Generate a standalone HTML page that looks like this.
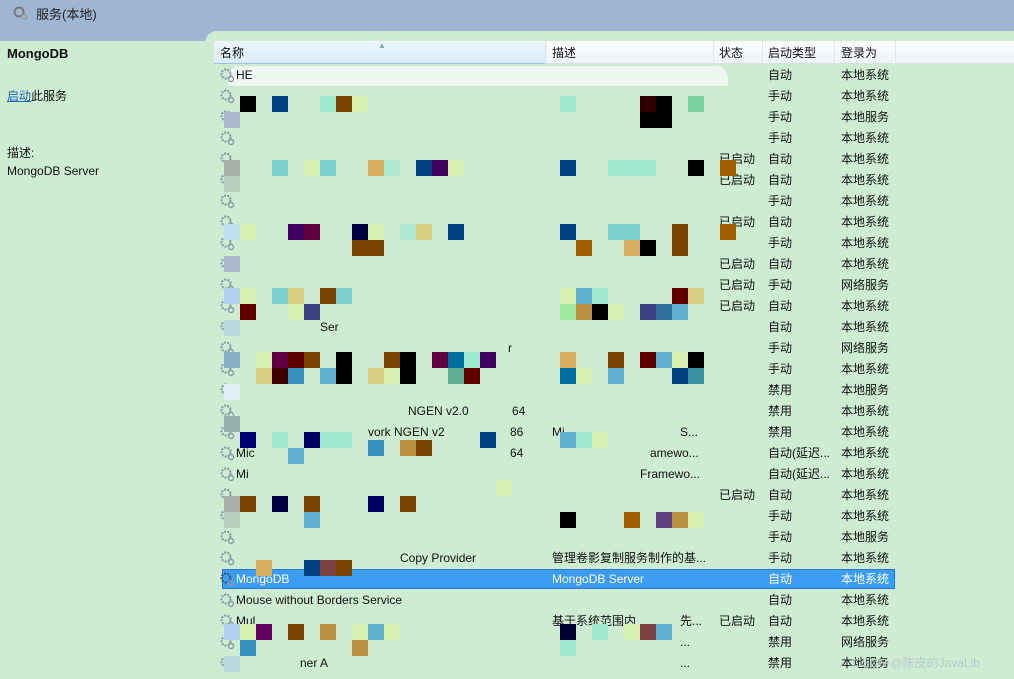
<!DOCTYPE html>
<html><head><meta charset="utf-8">
<style>
*{margin:0;padding:0;box-sizing:border-box}
body{width:1014px;height:679px;overflow:hidden;background:#cdecd2;font-family:"Liberation Sans","Noto Sans CJK SC",sans-serif;font-size:12px;color:#111;position:relative}
.t{position:absolute;white-space:nowrap;line-height:14px}
.b{position:absolute;width:16px;height:16px}
</style></head><body>
<div style="position:absolute;left:0;top:0;width:1014px;height:41px;background:#9fb6d2"></div>
<div style="position:absolute;left:205px;top:31px;width:809px;height:12px;background:#cdecd2;border-top-left-radius:12px"></div>
<div style="position:absolute;left:0;top:41px;width:205px;height:638px;background:#cdecd2"></div>
<svg style="position:absolute;left:12px;top:5px" width="16" height="16" viewBox="0 0 16 16"><circle cx="7" cy="7" r="4.5" fill="none" stroke="#777" stroke-width="2"/><circle cx="12" cy="12" r="2.5" fill="none" stroke="#999" stroke-width="1.5"/></svg>
<div class="t" style="left:36px;top:8px;font-size:13px;color:#222">服务(本地)</div>
<div class="t" style="left:7px;top:47px;font-weight:bold;font-size:13px">MongoDB</div>
<div class="t" style="left:7px;top:89px"><span style="color:#1866c0;text-decoration:underline">启动</span>此服务</div>
<div class="t" style="left:7px;top:146px">描述:</div>
<div class="t" style="left:7px;top:164px">MongoDB Server</div>
<div style="position:absolute;left:214px;top:41px;width:800px;height:23px;background:linear-gradient(#fbfdff,#eef4f9);border-bottom:1px solid #d5dfe8"></div>
<div style="position:absolute;left:214px;top:41px;width:331px;height:23px;background:linear-gradient(#eef6fd,#dcecf8);border-bottom:1px solid #9cc4e4"></div>
<div style="position:absolute;left:378px;top:41px;font-size:8px;color:#7aa">▲</div>
<div style="position:absolute;left:545px;top:41px;width:1px;height:23px;background:#d8e4ee"></div>
<div style="position:absolute;left:713px;top:41px;width:1px;height:23px;background:#e0e6ec"></div>
<div style="position:absolute;left:762px;top:41px;width:1px;height:23px;background:#e0e6ec"></div>
<div style="position:absolute;left:834px;top:41px;width:1px;height:23px;background:#e0e6ec"></div>
<div style="position:absolute;left:895px;top:41px;width:1px;height:23px;background:#e0e6ec"></div>
<div class="t" style="left:220px;top:46px">名称</div>
<div class="t" style="left:552px;top:46px">描述</div>
<div class="t" style="left:719px;top:46px">状态</div>
<div class="t" style="left:768px;top:46px">启动类型</div>
<div class="t" style="left:841px;top:46px">登录为</div>
<div style="position:absolute;left:228px;top:66px;width:500px;height:20px;background:#eef7f0;border-radius:12px 12px 0 0"></div>
<div style="position:absolute;left:222px;top:569px;width:673px;height:20px;background:#3c9cf4;border:1px solid #2a78c8"></div>
<div id="rows"></div>
<div class="t" style="left:853px;top:656px;color:#b8c8c8;font-size:12px">CSDN @陈皮的JavaLib</div>
<script>
var r=[["","自动","本地系统"],["","手动","本地系统"],["","手动","本地服务"],["","手动","本地系统"],["已启动","自动","本地系统"],["已启动","自动","本地系统"],["","手动","本地系统"],["已启动","自动","本地系统"],["","手动","本地系统"],["已启动","自动","本地系统"],["已启动","手动","网络服务"],["已启动","自动","本地系统"],["","自动","本地系统"],["","手动","网络服务"],["","手动","本地系统"],["","禁用","本地服务"],["","禁用","本地系统"],["","禁用","本地系统"],["","自动(延迟...","本地系统"],["","自动(延迟...","本地系统"],["已启动","自动","本地系统"],["","手动","本地系统"],["","手动","本地服务"],["","手动","本地系统"],["","自动","本地系统"],["","自动","本地系统"],["已启动","自动","本地系统"],["","禁用","网络服务"],["","禁用","本地服务"]];
var frag=[[0,236,"HE"],[12,320,"Ser"],[13,508,"r"],[16,408,"NGEN v2.0"],[16,512,"64"],[17,368,"vork NGEN v2"],[17,510,"86"],[17,552,"Mi"],[17,680,"S..."],[18,236,"Mic"],[18,510,"64"],[18,650,"amewo..."],[19,236,"Mi"],[19,640,"Framewo..."],[23,400,"Copy Provider"],[23,552,"管理卷影复制服务制作的基..."],[24,236,"MongoDB"],[24,552,"MongoDB Server"],[25,236,"Mouse without Borders Service"],[26,236,"Mul"],[26,552,"基于系统范围内"],[26,680,"先..."],[27,680,"..."],[28,300,"ner A"],[28,680,"..."]];
var h="";
for(var i=0;i<r.length;i++){var y=68+i*21;var c=i==24?"#fff":"#111";
h+='<svg style="position:absolute;left:219px;top:'+(y-1)+'px" width="16" height="16" viewBox="0 0 16 16"><circle cx="7" cy="7" r="4.5" fill="none" stroke="'+(i==24?"#357":"#8a9aa8")+'" stroke-width="2.2" stroke-dasharray="2 1.2"/><circle cx="12" cy="12" r="2.5" fill="none" stroke="#8a9aa8" stroke-width="1.4"/></svg>';
h+='<div class="t" style="left:719px;top:'+y+'px;color:'+c+'">'+r[i][0]+'</div><div class="t" style="left:768px;top:'+y+'px;color:'+c+'">'+r[i][1]+'</div><div class="t" style="left:841px;top:'+y+'px;color:'+c+'">'+r[i][2]+'</div>';}
for(var k=0;k<frag.length;k++){var f=frag[k];h+='<div class="t" style="left:'+f[1]+'px;top:'+(68+f[0]*21)+'px;color:'+(f[0]==24?"#fff":"#111")+'">'+f[2]+'</div>';}
var B=[[96,240,"#000"],[96,272,"#004080"],[96,320,"#9fe8d0"],[96,336,"#7b4300"],[96,352,"#d8f0b0"],[96,560,"#9fe8d0"],[96,640,"#300000"],[96,656,"#000"],[96,688,"#7bd09f"],[112,640,"#000"],[112,656,"#000"],[112,224,"#aab8d0"],
[160,224,"#aab0aa"],[160,272,"#7bd0d0"],[160,304,"#d8f0b0"],[160,320,"#7bd0d0"],[160,368,"#d8b060"],[160,384,"#aee8d0"],[160,416,"#004080"],[160,432,"#400060"],[160,448,"#d8f0b0"],[160,560,"#004080"],[160,608,"#9fe8d0"],[160,624,"#9fe8d0"],[160,640,"#9fe8d0"],[160,688,"#000"],[160,720,"#a06000"],[176,224,"#b8d0c0"],
[224,224,"#bde0f0"],[224,240,"#d8f0b0"],[224,288,"#400060"],[224,304,"#600040"],[224,352,"#000040"],[224,368,"#d8f0b0"],[224,400,"#aee8d0"],[224,416,"#d8d080"],[224,448,"#004080"],[224,560,"#004080"],[224,608,"#7bd0d0"],[224,624,"#7bd0d0"],[224,672,"#7b4300"],[224,720,"#a06000"],
[240,352,"#7b4300"],[240,368,"#7b4300"],[240,576,"#a06000"],[240,624,"#d8b060"],[240,640,"#000"],[240,672,"#7b4300"],[256,224,"#aab8d0"],
[288,224,"#b0d0f0"],[288,240,"#d8f0b0"],[288,272,"#7bd0d0"],[288,288,"#d8d080"],[288,320,"#7b4300"],[288,336,"#7bd0d0"],[288,560,"#d8f0b0"],[288,576,"#60b0d0"],[288,592,"#9fe8d0"],[288,672,"#600000"],[288,688,"#d8d080"],
[304,240,"#600000"],[304,288,"#d8f0b0"],[304,304,"#3b4080"],[304,560,"#9fe89f"],[304,576,"#b89040"],[304,592,"#000"],[304,608,"#d8f0b0"],[304,640,"#3b4080"],[304,656,"#3070a0"],[304,672,"#60b0d0"],[320,224,"#b8d8e0"],
[352,224,"#8aadc8"],[352,256,"#d8f0b0"],[352,272,"#600040"],[352,288,"#600000"],[352,304,"#7b4300"],[352,336,"#000"],[352,384,"#7b4300"],[352,400,"#000"],[352,432,"#600040"],[352,448,"#0070a0"],[352,464,"#9fe8d0"],[352,480,"#400060"],[352,560,"#d8b060"],[352,608,"#7b4300"],[352,640,"#600000"],[352,656,"#60b0d0"],[352,672,"#d8f0b0"],[352,688,"#000"],
[368,256,"#d8d080"],[368,272,"#400000"],[368,288,"#3890c0"],[368,320,"#60b0d0"],[368,336,"#000"],[368,368,"#d8d080"],[368,384,"#d8f0b0"],[368,400,"#000"],[368,448,"#60b098"],[368,464,"#600000"],[368,560,"#0070a0"],[368,576,"#d8f0b0"],[368,608,"#60b0d0"],[368,672,"#004080"],[368,688,"#3890a0"],[384,224,"#e0f0f8"],[416,224,"#98b0b0"],
[432,240,"#000070"],[432,272,"#9fe8d0"],[432,304,"#000060"],[432,320,"#9fe8d0"],[432,336,"#9fe8d0"],[432,480,"#004080"],[440,368,"#3890c0"],[440,400,"#b89040"],[440,416,"#7b4300"],[432,560,"#60b0d0"],[432,576,"#9fe8d0"],[432,592,"#d8f0b0"],[448,288,"#60b0d0"],
[496,224,"#aab0aa"],[496,240,"#7b4300"],[496,272,"#000040"],[496,304,"#7b4300"],[496,368,"#000060"],[496,400,"#7b4300"],[480,496,"#d8f0b0"],[512,224,"#b8d0c0"],[512,304,"#60b0d0"],
[512,560,"#000"],[512,624,"#a06000"],[512,656,"#604080"],[512,672,"#b89040"],[512,688,"#d8f0b0"],[560,256,"#d8b060"],[560,304,"#004080"],[560,320,"#7b4040"],[560,336,"#7b4300"],
[624,224,"#b0d0f0"],[624,240,"#d8f0b0"],[624,256,"#600060"],[624,288,"#7b4300"],[624,320,"#b89040"],[624,352,"#d8f0b0"],[624,368,"#60b0d0"],[624,384,"#d8f0b0"],[624,560,"#000030"],[624,592,"#9fe8d0"],[624,624,"#d8f0b0"],[624,640,"#7b4040"],[624,656,"#60b0d0"],
[640,240,"#3890c0"],[640,352,"#b89040"],[640,560,"#9fe8d0"],[656,224,"#b8d8e0"]];
for(var j=0;j<B.length;j++)h+='<div class="b" style="top:'+B[j][0]+'px;left:'+B[j][1]+'px;background:'+B[j][2]+'"></div>';
document.getElementById("rows").innerHTML=h;
</script>
</body></html>
